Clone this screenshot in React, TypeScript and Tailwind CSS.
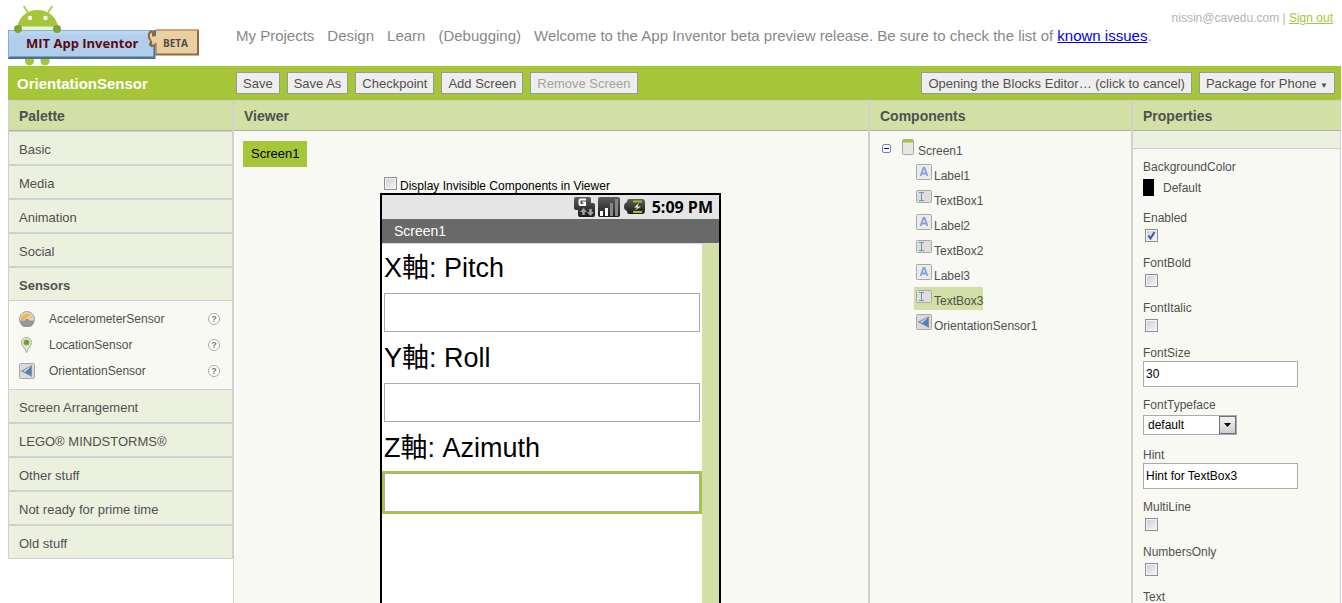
import { useState } from "react";
import type { ReactNode } from "react";
import clsx from "clsx";

type IconName = "accelerometer" | "location" | "orientation" | "label" | "textbox";

const navLinks = ["My Projects", "Design", "Learn", "(Debugging)"];

const sensors: { name: string; icon: IconName }[] = [
    { name: "AccelerometerSensor", icon: "accelerometer" },
    { name: "LocationSensor", icon: "location" },
    { name: "OrientationSensor", icon: "orientation" },
];

const components: { name: string; icon: IconName }[] = [
    { name: "Label1", icon: "label" },
    { name: "TextBox1", icon: "textbox" },
    { name: "Label2", icon: "label" },
    { name: "TextBox2", icon: "textbox" },
    { name: "Label3", icon: "label" },
    { name: "TextBox3", icon: "textbox" },
    { name: "OrientationSensor1", icon: "orientation" },
];

const screenRows = [
    { label: "X軸: Pitch", box: "TextBox1" },
    { label: "Y軸: Roll", box: "TextBox2" },
    { label: "Z軸: Azimuth", box: "TextBox3" },
];

function Logo() {
    return (
        <svg width="192" height="61" viewBox="8 5 192 61" role="img" aria-label="MIT App Inventor beta">
            <defs>
                <linearGradient id="plate" x1="0" y1="0" x2="0" y2="1">
                    <stop offset="0" stopColor="#c3dcf5" />
                    <stop offset="0.2" stopColor="#b2d0ee" />
                    <stop offset="1" stopColor="#b0ceec" />
                </linearGradient>
            </defs>
            <path d="M24 6.500L28 12.500M52 6.500L48 12.500" stroke="#a4c639" strokeWidth="1.500" strokeLinecap="round" />
            <path d="M17.500 27C18.500 17 27 10 37.500 10S57 17 58 27Z" fill="#a4c639" />
            <path d="M18 26.500h39v4h-39z" fill="#e9f6cf" />
            <circle cx="30" cy="18" r="2.200" fill="#fff" />
            <circle cx="45.500" cy="18" r="2.200" fill="#fff" />
            <path d="M25 57h9v4a4.500 4.500 0 0 1-9 0zM40.500 57h9v4a4.500 4.500 0 0 1-9 0z" fill="#a4c639" />
            <path d="M8 30H155.500V59H8Z" fill="#4d7096" />
            <path d="M8 30H153.500V56.500H9.500L8 58Z" fill="url(#plate)" />
            <path d="M8 30.500H154M8.500 30V58" stroke="#86add6" fill="none" />
            <path d="M156 29.500H199V55.500H155.500V44.500L153 47L149 45.500L150.500 41L148.500 38V33L151 30.500L154 31.500L153.500 35H156Z" fill="#8d6b3c" />
            <path d="M155.500 30.500H197V53.500H156.500V42.500L152.500 45.500L152 41.500L150 37.500V34L152 32.500V36.500H155.500Z" fill="#ebcfa0" />
            <path d="M155.500 30V35.500H153V31.500L150 31L148.500 34V38L150.500 41L149.500 45L152 47L155.500 44" stroke="#7a6a52" fill="none" />
            <path d="M156 30H198" stroke="#c9a36b" />
            <circle cx="18" cy="29" r="4" fill="#7da336" />
            <circle cx="57" cy="29" r="4" fill="#7da336" />
            <text x="26" y="48" fontFamily="'Open Sans', sans-serif" fontWeight="700" fontSize="13" fill="#5c0a12">
                MIT App Inventor
            </text>
            <text x="163" y="47" fontFamily="'Open Sans', sans-serif" fontWeight="700" fontSize="10" fill="#4c4c4c">
                BETA
            </text>
        </svg>
    );
}

function Icon({ name }: { name: IconName }) {
    switch (name) {
        case "accelerometer":
            return (
                <svg width="16" height="16" viewBox="0 0 16 16" aria-hidden="true">
                    <circle cx="8" cy="8" r="7.500" fill="#d6d6d6" stroke="#a5a5a5" />
                    <path d="M3.500 9a4.800 4.800 0 0 1 9-2" stroke="#f6b546" strokeWidth="3.500" fill="none" />
                    <path d="M7 9.500L12.500 4.500" stroke="#f3e3c2" strokeWidth="1.200" />
                    <path d="M0.500 9.500h5.500a2 2 0 0 1 4 0h5.500a7.500 7 0 0 1-15 0Z" fill="#979797" />
                </svg>
            );
        case "location":
            return (
                <svg width="16" height="16" viewBox="0 0 16 16" aria-hidden="true">
                    <path d="M7.500 15.500C6.500 11.500 2.500 9 2.500 5.500a5 5 0 0 1 10 0C12.500 9 8.500 11.500 7.500 15.500Z" fill="#e4e4e2" stroke="#a6a6a6" />
                    <circle cx="7.500" cy="5.500" r="3" fill="#8fb936" />
                    <circle cx="7.500" cy="5.500" r="2.200" fill="#6a9f22" />
                </svg>
            );
        case "orientation":
            return (
                <svg width="16" height="16" viewBox="0 0 16 16" aria-hidden="true">
                    <rect x="0.500" y="0.500" width="15" height="15" rx="1" fill="#d9dbde" stroke="#a9a9a9" />
                    <path d="M13 2V14L1.500 8Z" fill="#8d8f93" />
                    <path d="M11.500 3.500L4 8L7.500 9.500Z" fill="#c6d3e8" />
                    <path d="M12 4V12.500L6 9Z" fill="#5080c4" />
                </svg>
            );
        case "label":
            return (
                <svg width="16" height="16" viewBox="0 0 16 16" aria-hidden="true">
                    <rect x="0.500" y="0.500" width="15" height="15" rx="1" fill="#ebebeb" stroke="#a9a9a9" />
                    <path d="M4.500 12L7.500 4h1L11.500 12M5.700 9.500h4.600" stroke="#83a3d6" strokeWidth="1.800" fill="none" />
                </svg>
            );
        case "textbox":
            return (
                <svg width="16" height="14" viewBox="0 0 16 14" aria-hidden="true">
                    <rect x="0.500" y="1.500" width="15" height="12" rx="1" fill="#dedede" stroke="#a9a9a9" />
                    <path d="M3 3.500h5M3 11.500h5M5.500 3.500v8" stroke="#7290c0" fill="none" />
                </svg>
            );
    }
}

function StatusIcons() {
    return (
        <svg width="72" height="22" viewBox="574 195 72 22" aria-hidden="true">
            <defs>
                <linearGradient id="chip" x1="0" y1="0" x2="0" y2="1">
                    <stop offset="0" stopColor="#5d5d5d" />
                    <stop offset="1" stopColor="#1c1c1c" />
                </linearGradient>
            </defs>
            <path d="M576 196h13q2 0 2 2v4h2q2 0 2 2v10q0 2-2 2h-13q-2 0-2-2v-5h-2q-2 0-2-2v-9q0-2 2-2z" fill="url(#chip)" />
            <path d="M586 198.500h-5.500q-1 0-1 1v3.500q0 1 1 1h4.500V201.500h-2.500" stroke="#fff" strokeWidth="2" fill="none" />
            <path d="M583.500 207l3.500 4h-2.200v3h-2.600v-3H580zM590.500 215l3.500-4h-2.200v-3h-2.600v3H587z" fill="#a2a2a2" />
            <rect x="598" y="196" width="22" height="20" rx="2" fill="url(#chip)" />
            <path d="M600 210h3v5h-3zM605 207h3v8h-3z" fill="#fff" />
            <path d="M610 202h3v13h-3zM615 198h3v17h-3z" fill="#858585" />
            <path d="M629 198h13q3 0 3 3v9q0 3-3 3h-13q-2 0-2-3-3-1-3-4.500t3-4.500q0-3 2-3z" fill="url(#chip)" />
            <path d="M633 199.500h9v2h-9zM633 210h9v2h-9z" fill="#93c90f" />
            <path d="M639 202l-5 4.500h3.500l-3.500 3.500 7-4.500h-3.500z" fill="#f2f2f2" />
        </svg>
    );
}

function Checkbox({ id, defaultChecked }: { id: string; defaultChecked?: boolean }) {
    return (
        <span className="relative block size-[13px] shrink-0">
            <input
                id={id}
                type="checkbox"
                defaultChecked={defaultChecked}
                className="peer block size-[13px] appearance-none border border-[#8e8f8f] bg-linear-to-br from-[#c9ccd5] to-[#f8f8f8] shadow-[inset_0_0_0_1px_#f4f4f4]"
            />
            <svg viewBox="0 0 13 13" className="pointer-events-none absolute inset-0 hidden size-[13px] peer-checked:block" aria-hidden="true">
                <path d="M3.500 6.500L5.500 9.500L9.500 3" stroke="#41599c" strokeWidth="2" fill="none" />
            </svg>
        </span>
    );
}

function ToolButton({ children, disabled }: { children: ReactNode; disabled?: boolean }) {
    return (
        <button
            type="button"
            disabled={disabled}
            className="h-[22px] border border-[#999] bg-[#eee] px-1.5 pt-px text-[13px] leading-5 whitespace-nowrap text-[#505050] disabled:text-[#a3a3a3]"
        >
            {children}
        </button>
    );
}

function PanelHeader({ children }: { children: ReactNode }) {
    return (
        <h2 className="h-[31px] border-t border-b border-t-[#d0d0d0] border-b-[#b0b2a0] bg-[#d2e0a6] px-2.5 pt-px text-[14px] leading-[29px] font-bold text-[#505050]">
            {children}
        </h2>
    );
}

function Drawer({ children, open }: { children: ReactNode; open?: boolean }) {
    return (
        <button
            type="button"
            aria-expanded={!!open}
            className={clsx(
                "block h-[34px] w-full border border-[#d0d0d0] bg-[#ecf1df] px-2.5 pt-1 text-left text-[13px] leading-7 text-[#505050]",
                open && "font-bold",
            )}
        >
            {children}
        </button>
    );
}

function Palette() {
    return (
        <aside className="w-[226px] shrink-0 border-r border-[#d0d0d0]">
            <div className="border-x border-[#d0d0d0]">
                <PanelHeader>Palette</PanelHeader>
            </div>
            <Drawer>Basic</Drawer>
            <Drawer>Media</Drawer>
            <Drawer>Animation</Drawer>
            <Drawer>Social</Drawer>
            <Drawer open>Sensors</Drawer>
            <ul className="border-x border-[#d0d0d0] bg-[#f8f9f3] py-[5px] pr-3 pl-2.5">
                {sensors.map((sensor) => (
                    <li key={sensor.name} className="flex h-[26px] items-center text-[12px] text-[#505050]">
                        <Icon name={sensor.icon} />
                        <span className="ml-3.5 grow">{sensor.name}</span>
                        <button
                            type="button"
                            aria-label={`Help for ${sensor.name}`}
                            className="size-3 rounded-full border border-[#aaa] bg-white text-center text-[9px] leading-[10px] font-bold text-[#777]"
                        >
                            ?
                        </button>
                    </li>
                ))}
            </ul>
            <Drawer>Screen Arrangement</Drawer>
            <Drawer>LEGO® MINDSTORMS®</Drawer>
            <Drawer>Other stuff</Drawer>
            <Drawer>Not ready for prime time</Drawer>
            <Drawer>Old stuff</Drawer>
        </aside>
    );
}

function Phone({ selected }: { selected: string }) {
    return (
        <div className="flex grow flex-col border-2 border-b-0 border-black bg-white">
            <div className="flex h-6 items-center justify-end gap-1.5 bg-[#e5e5e5] pr-1.5">
                <StatusIcons />
                <span className="font-['Open_Sans',sans-serif] text-[16px] leading-6 font-bold text-black">5:09 PM</span>
            </div>
            <div className="h-[25px] border-b border-[#d8d8d8] bg-[#696969] pl-3 text-[14px] leading-6 text-white">Screen1</div>
            <div className="flex grow">
                <div className="min-w-0 grow">
                    {screenRows.map((row) => (
                        <div key={row.box}>
                            <label htmlFor={row.box} className="block h-[47px] pt-px pl-0.5 text-[27px] leading-[47px] text-black">
                                {row.label}
                            </label>
                            <div className={clsx("border-2", row.box === selected ? "border-[#a5c639]" : "border-transparent")}>
                                <input id={row.box} type="text" className="block h-[39px] w-full border border-[#aaaab0] bg-white px-1 text-[27px]" />
                            </div>
                        </div>
                    ))}
                </div>
                <div className="w-[17px] shrink-0 bg-[#d2e0a6]" />
            </div>
        </div>
    );
}

function Viewer({ selected }: { selected: string }) {
    return (
        <main className="flex min-w-0 grow flex-col border-r-2 border-[#d0d0d0] bg-[#f8f9f3]">
            <PanelHeader>Viewer</PanelHeader>
            <div className="flex grow flex-col pt-2.5 pr-2.5 pl-[9px]">
                <button type="button" className="h-[26px] self-start bg-[#a5c639] px-2 text-[13px] leading-[26px] text-black">
                    Screen1
                </button>
                <div className="mx-auto mt-2.5 flex w-[341px] grow flex-col">
                    <div className="flex h-4 items-start gap-[3px] pl-1 text-[12px] text-black">
                        <Checkbox id="show-invisible" />
                        <label htmlFor="show-invisible" className="leading-[18px]">
                            Display Invisible Components in Viewer
                        </label>
                    </div>
                    <Phone selected={selected} />
                </div>
            </div>
        </main>
    );
}

function ComponentTree({ selected, onSelect }: { selected: string; onSelect: (name: string) => void }) {
    return (
        <section className="w-[263px] shrink-0 border-r-2 border-[#d0d0d0] bg-[#f8f9f3]">
            <PanelHeader>Components</PanelHeader>
            <div className="pt-1.5 pl-3 text-[12px] text-[#505050]">
                <div className="flex h-[25px] items-start">
                    <button type="button" aria-label="Collapse Screen1" className="mt-[7px] flex size-[9px] items-center justify-center rounded-xs border border-[#7483c4] bg-white">
                        <span className="h-px w-[5px] bg-[#0000c0]" />
                    </button>
                    <svg width="12" height="16" viewBox="0 0 12 16" className="mt-0.5 ml-[11px]" aria-hidden="true">
                        <rect x="0.500" y="0.500" width="11" height="15" rx="1" fill="#e6e6e6" stroke="#a9a9a9" />
                        <path d="M1 0.500h10v3H1z" fill="#a4c639" />
                    </svg>
                    <span className="ml-1 pt-1 leading-5">Screen1</span>
                </div>
                <ul className="pl-8">
                    {components.map((item) => (
                        <li key={item.name} className="h-[25px]">
                            <button
                                type="button"
                                onClick={() => onSelect(item.name)}
                                className={clsx("flex h-[23px] items-start pl-0.5", item.name === selected && "bg-[#d2e0a6]")}
                            >
                                <span className="pt-0.5">
                                    <Icon name={item.icon} />
                                </span>
                                <span className="ml-0.5 pt-1 leading-5">{item.name}</span>
                            </button>
                        </li>
                    ))}
                </ul>
            </div>
        </section>
    );
}

function Field({ id, label, children }: { id: string; label: string; children: ReactNode }) {
    return (
        <div>
            <label htmlFor={id} className="block h-4 text-[12px] leading-4 text-[#505050]">
                {label}
            </label>
            {children}
        </div>
    );
}

function CheckField({ id, label, checked }: { id: string; label: string; checked?: boolean }) {
    return (
        <Field id={id} label={label}>
            <div className="px-0.5 py-[3px]">
                <Checkbox id={id} defaultChecked={checked} />
            </div>
        </Field>
    );
}

function TextField({ id, label, value }: { id: string; label: string; value: string }) {
    return (
        <Field id={id} label={label}>
            <input id={id} type="text" defaultValue={value} className="block h-[26px] w-[155px] border border-[#aaaab0] bg-white px-0.5 text-[12px] text-black" />
        </Field>
    );
}

function Properties() {
    return (
        <section className="w-[208px] shrink-0 border-r border-[#d0d0d0] bg-[#f8f9f3]">
            <PanelHeader>Properties</PanelHeader>
            <div className="h-[18px] border-b border-[#d0d0d0] bg-[#ecf1df]" />
            <form className="flex flex-col gap-2.5 px-2.5 pt-2.5">
                <Field id="background" label="BackgroundColor">
                    <button id="background" type="button" className="my-1 flex h-[17px] items-center gap-[9px] text-[12px] text-[#505050]">
                        <span className="h-full w-[11px] bg-black" />
                        Default
                    </button>
                </Field>
                <CheckField id="enabled" label="Enabled" checked />
                <CheckField id="bold" label="FontBold" />
                <CheckField id="italic" label="FontItalic" />
                <TextField id="size" label="FontSize" value="30" />
                <Field id="typeface" label="FontTypeface">
                    <div className="py-0.5">
                        <div className="relative h-5 w-[94px]">
                            <select id="typeface" className="block h-full w-full appearance-none border border-[#aaaab0] bg-white px-1 text-[12px] text-black">
                                <option>default</option>
                                <option>sans serif</option>
                                <option>serif</option>
                                <option>monospace</option>
                            </select>
                            <span className="pointer-events-none absolute inset-y-px right-px flex w-[17px] items-center justify-center border border-[#707070] bg-linear-to-b from-[#f2f2f2] to-[#cfcfcf]">
                                <svg width="7" height="4" viewBox="0 0 7 4" aria-hidden="true">
                                    <path d="M0 0h7L3.500 4z" fill="#000" />
                                </svg>
                            </span>
                        </div>
                    </div>
                </Field>
                <TextField id="hint" label="Hint" value="Hint for TextBox3" />
                <CheckField id="multiline" label="MultiLine" />
                <CheckField id="numbers" label="NumbersOnly" />
                <TextField id="text" label="Text" value="" />
            </form>
        </section>
    );
}

export default function App() {
    const [selected, setSelected] = useState("TextBox3");

    return (
        <div className="flex h-screen flex-col overflow-hidden bg-white pr-px pl-2 font-['Liberation_Sans','Noto_Sans_CJK_TC',sans-serif]">
            <header className="flex h-[66px] shrink-0 items-start">
                <div className="w-[228px] shrink-0 pt-[5px]">
                    <Logo />
                </div>
                <nav className="flex grow gap-[13px] pt-[26px] text-[15px] leading-5 whitespace-nowrap text-[#888]">
                    {navLinks.map((link) => (
                        <a key={link} href="#">
                            {link}
                        </a>
                    ))}
                    <p>
                        Welcome to the App Inventor beta preview release. Be sure to check the list of{" "}
                        <a href="#" className="text-[#0000ee] underline">
                            known issues
                        </a>
                        .
                    </p>
                </nav>
                <p className="pt-2.5 pr-2 text-[12px] leading-4 whitespace-nowrap text-[#b3b3b3]">
                    nissin@cavedu.com |{" "}
                    <a href="#" className="text-[#a5c639] underline">
                        Sign out
                    </a>
                </p>
            </header>

            <div className="flex h-[34px] shrink-0 items-center gap-[7px] bg-[#a5c639] pr-1.5">
                <h1 className="w-[221px] shrink-0 pt-0.5 pl-[9px] text-[15px] font-bold text-white">OrientationSensor</h1>
                <ToolButton>Save</ToolButton>
                <ToolButton>Save As</ToolButton>
                <ToolButton>Checkpoint</ToolButton>
                <ToolButton>Add Screen</ToolButton>
                <ToolButton disabled>Remove Screen</ToolButton>
                <div className="grow" />
                <ToolButton>Opening the Blocks Editor… (click to cancel)</ToolButton>
                <ToolButton>
                    Package for Phone <span className="text-[8px]">▼</span>
                </ToolButton>
            </div>

            <div className="flex min-h-0 grow">
                <Palette />
                <Viewer selected={selected} />
                <ComponentTree selected={selected} onSelect={setSelected} />
                <Properties />
            </div>
        </div>
    );
}
